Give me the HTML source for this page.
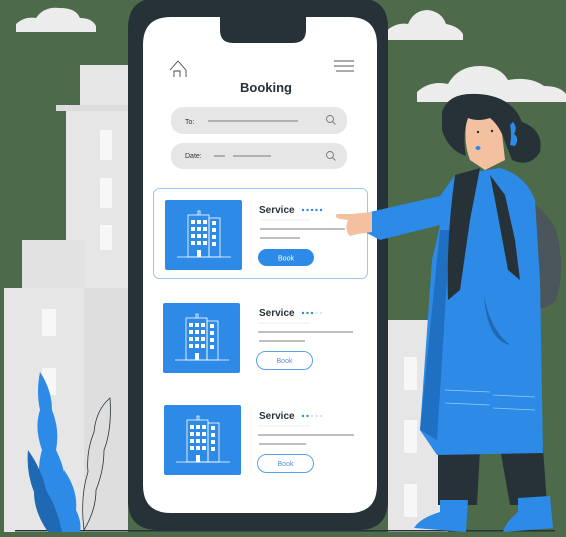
<!DOCTYPE html>
<html><head><meta charset="utf-8"><style>
html,body{margin:0;padding:0;background:#4d6b4b;}
svg{display:block}
text{font-family:"Liberation Sans",sans-serif}
</style></head><body>
<svg width="566" height="537" viewBox="0 0 566 537" xmlns="http://www.w3.org/2000/svg">
<rect width="566" height="537" fill="#4d6b4b"/>
<g fill="#ececec">
<path d="M16 32 L16 24 Q24 16 36 18 Q44 6 60 8 Q76 8 80 18 Q92 18 96 26 L96 32 Z"/>
<path d="M385 40 L385 32 Q396 22 408 24 Q414 10 428 10 Q442 12 446 24 Q458 26 463 34 L463 40 Z"/>
<path d="M417 102 L417 92 Q430 80 448 84 Q458 66 480 66 Q500 66 508 80 Q530 76 544 86 Q560 86 566 94 L566 102 Z"/>
</g>
<g fill="#e6e6e6">
<rect x="80" y="65" width="48" height="240"/>
<rect x="56" y="105" width="72" height="6" fill="#dcdcdc"/>
<rect x="66" y="111" width="62" height="190"/>
<rect x="22" y="240" width="63" height="60" fill="#e2e2e2"/>
<rect x="4" y="288" width="124" height="244"/>
<rect x="84" y="288" width="44" height="244" fill="#dedede"/>
<rect x="388" y="320" width="60" height="212"/>
</g>
<g fill="#f7f7f7">
<rect x="42" y="309" width="14" height="27"/><rect x="42" y="368" width="14" height="27"/><rect x="42" y="428" width="14" height="27"/>
<rect x="100" y="130" width="12" height="30"/><rect x="100" y="178" width="12" height="30"/><rect x="100" y="225" width="12" height="25"/>
<rect x="404" y="357" width="13" height="33"/><rect x="404" y="420" width="13" height="33"/><rect x="404" y="484" width="13" height="33"/>
</g>
<rect x="15" y="530" width="540" height="1.5" fill="#263238"/>
<path d="M40 372 Q52 390 52 410 Q60 430 56 450 Q66 470 66 490 Q78 510 76 532 L58 532 Q44 514 42 494 Q36 470 42 450 Q34 428 40 410 Q36 392 40 372 Z" fill="#2d8ae6"/>
<path d="M28 450 Q42 470 46 490 Q58 510 62 532 L48 532 Q34 512 34 492 Q26 472 28 450 Z" fill="#1f68b3"/>
<path d="M64 470 Q78 490 76 510 Q82 522 80 532 L66 532 Q60 512 64 470 Z" fill="#2d8ae6"/>
<path d="M110 398 Q96 410 94 432 Q86 452 88 472 Q80 496 84 530 Q96 510 96 490 Q104 470 104 450 Q112 430 110 398 Z" fill="none" stroke="#263238" stroke-width="0.8"/>
<path d="M128 28 Q128 -2 158 -2 L358 -2 Q388 -2 388 28 L388 500 Q388 530 358 530 L158 530 Q128 530 128 500 Z" fill="#263238"/>
<path d="M143 45 Q143 17 171 17 L220 17 L220 30 Q220 43 233 43 L293 43 Q306 43 306 30 L306 17 L349 17 Q377 17 377 45 L377 485 Q377 513 349 513 L171 513 Q143 513 143 485 Z" fill="#fff"/>
<path d="M170 70 L178 61 L186 70 L186 77 M174 77 L174 71 L180 71 L180 77" fill="none" stroke="#444" stroke-width="0.9"/>
<g stroke="#555" stroke-width="0.9"><line x1="334" y1="61" x2="354" y2="61"/><line x1="334" y1="66" x2="354" y2="66"/><line x1="336" y1="71" x2="354" y2="71"/></g>
<text x="266" y="92" font-size="13" font-weight="bold" fill="#263238" text-anchor="middle">Booking</text>
<rect x="171" y="107" width="176" height="27" rx="12" fill="#e6e6e6"/>
<rect x="171" y="143" width="176" height="26" rx="12" fill="#e6e6e6"/>
<text x="185" y="124" font-size="7" fill="#333">To:</text>
<text x="185" y="158" font-size="7" fill="#333">Date:</text>
<line x1="208" y1="121" x2="298" y2="121" stroke="#555" stroke-width="0.8"/>
<line x1="214" y1="156" x2="225" y2="156" stroke="#555" stroke-width="0.8"/>
<line x1="233" y1="156" x2="271" y2="156" stroke="#555" stroke-width="0.8"/>
<g fill="none" stroke="#777" stroke-width="0.9">
<circle cx="330" cy="119" r="3.5"/><line x1="332.5" y1="121.5" x2="335.5" y2="124.5"/>
<circle cx="330" cy="155" r="3.5"/><line x1="332.5" y1="157.5" x2="335.5" y2="160.5"/>
</g>
<rect x="153.5" y="188.5" width="214" height="90" rx="6" fill="#fff" stroke="#9cc5ef"/>
<defs>
<g id="bld">
<rect width="77" height="70" rx="2" fill="#2d8ae6"/>
<g fill="none" stroke="#fff" stroke-width="0.8"><rect x="23" y="15" width="21" height="42"/><rect x="44" y="18" width="11" height="39"/><line x1="12" y1="57" x2="66" y2="57"/><path d="M33 15 V11 H35 V15"/></g>
<g fill="#fff">
<rect x="26" y="20" width="4" height="4"/><rect x="32" y="20" width="4" height="4"/><rect x="38" y="20" width="4" height="4"/><rect x="47" y="21" width="4" height="4"/>
<rect x="26" y="27" width="4" height="4"/><rect x="32" y="27" width="4" height="4"/><rect x="38" y="27" width="4" height="4"/><rect x="47" y="28" width="4" height="4"/>
<rect x="26" y="34" width="4" height="4"/><rect x="32" y="34" width="4" height="4"/><rect x="38" y="34" width="4" height="4"/><rect x="47" y="35" width="4" height="4"/>
<rect x="26" y="41" width="4" height="4"/><rect x="32" y="41" width="4" height="4"/><rect x="38" y="41" width="4" height="4"/><rect x="47" y="42" width="4" height="4"/>
<rect x="32" y="50" width="4" height="7"/>
</g></g></defs>
<use href="#bld" x="165" y="200"/>
<use href="#bld" x="163" y="303"/>
<use href="#bld" x="164" y="405"/>
<g font-size="10" font-weight="bold" fill="#263238">
<text x="259" y="213">Service</text><text x="259" y="316">Service</text><text x="259" y="419">Service</text>
</g>
<g fill="#2d8ae6">
<circle cx="303" cy="210" r="1.2"/><circle cx="307.5" cy="210" r="1.2"/><circle cx="312" cy="210" r="1.2"/><circle cx="316.5" cy="210" r="1.2"/><circle cx="321" cy="210" r="1.2"/>
<circle cx="303" cy="313" r="1.2"/><circle cx="307.5" cy="313" r="1.2"/><circle cx="312" cy="313" r="1.2"/>
<circle cx="303" cy="416" r="1.2"/><circle cx="307.5" cy="416" r="1.2"/>
</g>
<g fill="#d6e4f3"><circle cx="316.5" cy="313" r="1.2"/><circle cx="321" cy="313" r="1.2"/><circle cx="312" cy="416" r="1.2"/><circle cx="316.5" cy="416" r="1.2"/><circle cx="321" cy="416" r="1.2"/></g>
<g stroke="#555" stroke-width="0.8">
<line x1="260" y1="229" x2="345" y2="229"/><line x1="260" y1="238" x2="300" y2="238"/>
<line x1="258" y1="332" x2="353" y2="332"/><line x1="259" y1="341" x2="305" y2="341"/>
<line x1="258" y1="435" x2="354" y2="435"/><line x1="259" y1="444" x2="306" y2="444"/>
</g>
<g stroke="#ddd" stroke-width="0.6"><line x1="260" y1="220" x2="310" y2="220"/><line x1="258" y1="323" x2="310" y2="323"/><line x1="258" y1="426" x2="310" y2="426"/></g>
<rect x="258" y="249" width="56" height="17" rx="8.5" fill="#2d8ae6"/>
<text x="286" y="260.5" font-size="7" fill="#fff" text-anchor="middle">Book</text>
<rect x="256.5" y="351.5" width="56" height="18" rx="9" fill="#fff" stroke="#5aa2ea"/>
<text x="284.5" y="363" font-size="7" fill="#5a8fd0" text-anchor="middle">Book</text>
<rect x="257.5" y="454.5" width="56" height="18" rx="9" fill="#fff" stroke="#5aa2ea"/>
<text x="285.5" y="466" font-size="7" fill="#5a8fd0" text-anchor="middle">Book</text>
<path d="M505 195 Q540 198 556 230 Q566 270 556 300 Q545 312 525 308 L505 300 Z" fill="#4a555c"/>
<path d="M438 450 L480 450 L477 505 L438 505 Z" fill="#263238"/>
<path d="M500 448 L543 448 L547 505 L510 505 Z" fill="#263238"/>
<path d="M440 500 L468 500 L466 532 L414 528 Q420 518 440 512 Z" fill="#2d8ae6"/>
<path d="M518 498 L550 496 L553 528 L503 532 Q506 522 518 512 Z" fill="#2d8ae6"/>
<path d="M455 175 L500 168 Q525 175 535 200 L540 280 L543 453 L437 455 L420 430 L432 260 Q438 235 440 225 L380 240 L365 232 L370 212 L440 196 Z" fill="#2d8ae6"/>
<path d="M440 230 L433 300 L420 430 L437 440 L450 230 Z" fill="#1f6fc2"/>
<path d="M484 295 Q487 340 510 345 Q490 330 484 295 Z" fill="#1f68b3"/>
<path d="M455 175 L480 168 L470 220 L460 290 L448 300 Q446 240 455 175 Z" fill="#263238"/>
<path d="M490 175 L505 195 L515 240 L520 280 L508 270 L495 200 Z" fill="#263238"/>
<g stroke="#9cc8f2" stroke-width="0.8"><line x1="445" y1="390" x2="490" y2="392"/><line x1="493" y1="395" x2="535" y2="397"/><line x1="445" y1="403" x2="490" y2="405"/><line x1="493" y1="408" x2="535" y2="410"/></g>
<path d="M372 212 L352 214 L337 214 Q333 217 340 219 L348 220 Q344 230 350 236 L358 234 L372 232 Z" fill="#f3c1a0"/>
<path d="M468 112 Q480 105 500 115 L505 160 L485 170 L470 160 Q462 140 468 112 Z" fill="#f3c1a0"/>
<path d="M442 112 Q448 92 478 94 Q512 96 522 122 Q544 130 540 152 Q530 168 512 160 L505 142 Q500 126 490 118 Q478 122 468 118 Q462 135 466 156 Q448 150 442 130 Z" fill="#263238"/>
<path d="M513 122 Q518 128 514 134 Q520 138 515 146 L510 145 Q512 135 510 125 Z" fill="#2d8ae6"/>
<circle cx="478" cy="132" r="1.2" fill="#263238"/><circle cx="492" cy="131" r="1.2" fill="#263238"/>
<ellipse cx="478" cy="148" rx="2.5" ry="2" fill="#2d8ae6"/>
</svg>
</body></html>
